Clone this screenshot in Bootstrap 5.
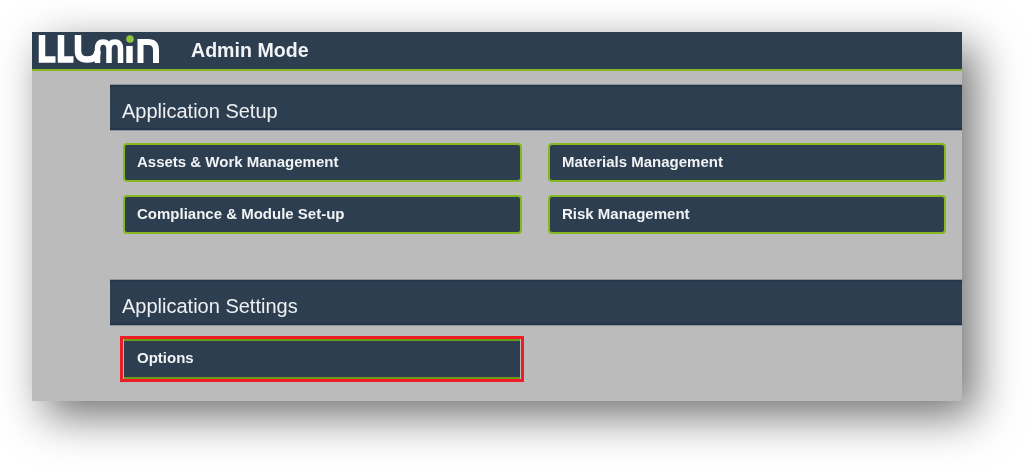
<!DOCTYPE html>
<html lang="en">
<head>
  <meta charset="UTF-8" />
  <meta name="viewport" content="width=device-width, initial-scale=1.0"/>
  <title>Admin Mode</title>
  <link href="https://cdn.jsdelivr.net/npm/bootstrap@5.3.3/dist/css/bootstrap.min.css" rel="stylesheet" />
  <style>
    body { background: #fff; font-family: "Liberation Sans", Arial, sans-serif; }
    .shot-wrap { padding: 32px 0 65px 32px; overflow: hidden; }
    .shot-frame { width: 930px; height: 369px; background: #bbb; box-shadow: 13px 15px 42px rgba(0,0,0,.56); filter: blur(.45px); }
    .top-bar { height: 39px; background: #2c3e50; border-bottom: 2px solid #86b820; padding-left: 5px; }
    .top-bar svg { display: block; flex: none; }
    .top-title { margin-left: 30px; color: #f1f3f4; font-size: 19.6px; font-weight: 700; }
    .page-body { padding: 13px 0 0 78px; }
    .sect-head { height: 47px; background: #2c3e50; color: #eef0f2; font-size: 20px; padding: 7px 0 0 12px; border-top: 1px solid #8d959c; border-bottom: 1px solid #8d959c; box-shadow: inset 0 2px #24364b, inset 0 -2px #24364b; }
    .tile-grid { display: grid; grid-template-columns: 399px 398px; column-gap: 26px; row-gap: 13px; padding: 12px 0 0 13px; }
    .tile { height: 39px; background: #2c3e50; color: #f1f3f4; font-size: 15px; font-weight: 700; border: 2px solid #86b820; border-radius: 4px; padding-left: 12px; }
    .sect-gap { margin-top: 45px; }
    .options-grid { padding-top: 10px; }
    .tile-marked { width: 404px; height: 46px; border: 3px solid #ee1c25; margin-left: -3px; }
    .tile-marked .tile { height: 40px; border-width: 2px 0 2px 0; border-color: #6f9a14; border-radius: 0; padding: 0 0 2px 13px; margin: 0 1px; }
  </style>
</head>
<body>
  <div class="shot-wrap">
    <div class="shot-frame">
      <div class="top-bar d-flex align-items-center">
        <svg width="124" height="37" viewBox="0 0 124 37" role="img" aria-label="LLUMiN logo">
          <g fill="none" stroke="#fff" stroke-width="6.5">
            <path d="M5 3V27.5H18.5"/>
            <path d="M24 3V27.5H36.5"/>
            <path d="M41 3V19Q41 27.5 50 27.5Q60.5 27.5 60.5 19"/>
          </g>
          <g fill="none" stroke="#fff" stroke-width="5.5">
            <path d="M60.5 31V17Q60.5 10 66 10Q72 10 72 17V31M72 17Q72 10 78 10Q83.5 10 83.5 17V31"/>
            <path d="M92.5 14V31" stroke-width="6.5"/>
            <path d="M103.5 31V10H111Q119 10 119 18V31" stroke-width="6"/>
          </g>
          <circle cx="93" cy="7" r="3.8" fill="#8cc63f"/>
        </svg>
        <div class="top-title">Admin Mode</div>
      </div>
      <div class="page-body">
        <div class="sect-head d-flex align-items-center">Application Setup</div>
        <div class="tile-grid">
          <div class="tile d-flex align-items-center">Assets &amp; Work Management</div>
          <div class="tile d-flex align-items-center">Materials Management</div>
          <div class="tile d-flex align-items-center">Compliance &amp; Module Set-up</div>
          <div class="tile d-flex align-items-center">Risk Management</div>
        </div>
        <div class="sect-head sect-gap d-flex align-items-center">Application Settings</div>
        <div class="tile-grid options-grid">
          <div class="tile-marked">
            <div class="tile d-flex align-items-center">Options</div>
          </div>
        </div>
      </div>
    </div>
  </div>
  <script src="https://cdn.jsdelivr.net/npm/bootstrap@5.3.3/dist/js/bootstrap.bundle.min.js"></script>
</body>
</html>
